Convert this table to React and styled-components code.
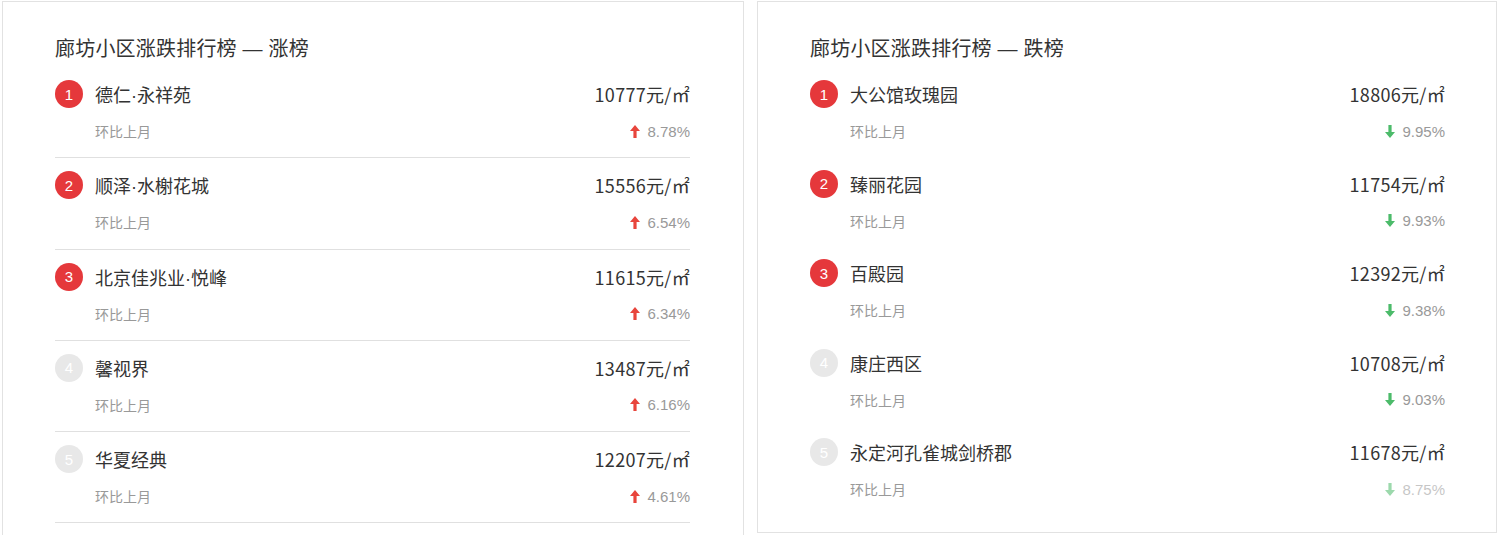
import styled, { createGlobalStyle } from 'styled-components';

const GlobalStyle = createGlobalStyle`
	html, body {
		margin: 0;
		padding: 0;
		background: #fff;
	}
	body {
		font-family: 'Liberation Sans', 'Noto Sans CJK SC', sans-serif;
		color: #333;
	}
`;

const rise = [
	{ name: '德仁·永祥苑', price: 10777, rate: '8.78%' },
	{ name: '顺泽·水榭花城', price: 15556, rate: '6.54%' },
	{ name: '北京佳兆业·悦峰', price: 11615, rate: '6.34%' },
	{ name: '馨视界', price: 13487, rate: '6.16%' },
	{ name: '华夏经典', price: 12207, rate: '4.61%' },
];

const fall = [
	{ name: '大公馆玫瑰园', price: 18806, rate: '9.95%' },
	{ name: '臻丽花园', price: 11754, rate: '9.93%' },
	{ name: '百殿园', price: 12392, rate: '9.38%' },
	{ name: '康庄西区', price: 10708, rate: '9.03%' },
	{ name: '永定河孔雀城剑桥郡', price: 11678, rate: '8.75%', fading: true },
];

// 上涨/下跌箭头
const Arrow = ({ up }) => (
	<svg width='10' height='13' viewBox='0 0 10 13'>
		{up ? (
			<path d='M5 0 L10 6 L6.6 6 L6.6 13 L3.4 13 L3.4 6 L0 6 Z' fill='#e8453c' />
		) : (
			<path d='M5 13 L10 7 L6.6 7 L6.6 0 L3.4 0 L3.4 7 L0 7 Z' fill='#4cbb6a' />
		)}
	</svg>
);

const RankPanel = ({ title, list, up, divided }) => (
	<Panel $divided={divided}>
		<Title>{title}</Title>
		<List>
			{list.map((item, i) => (
				<Row key={item.name} $divided={divided}>
					<MainLine>
						<Badge $top={i < 3}>{i + 1}</Badge>
						<Name>{item.name}</Name>
						<Price>{item.price}元/㎡</Price>
					</MainLine>
					<SubLine $fading={item.fading}>
						<SubLabel>环比上月</SubLabel>
						<Rate>
							<Arrow up={up} />
							{item.rate}
						</Rate>
					</SubLine>
				</Row>
			))}
		</List>
	</Panel>
);

const App = () => (
	<>
		<GlobalStyle />
		<Page>
			<RankPanel title='廊坊小区涨跌排行榜 — 涨榜' list={rise} up divided />
			<RankPanel title='廊坊小区涨跌排行榜 — 跌榜' list={fall} />
		</Page>
	</>
);

export default App;

const Page = styled.div`
	display: grid;
	grid-template-columns: 742px 740px;
	column-gap: 13px;
	align-items: start;
	padding: 1px 0 0 2px;
`;

const Panel = styled.section`
	box-sizing: border-box;
	border: 1px solid #e2e2e2;
	background: #fff;
	padding: 33px ${(p) => (p.$divided ? '53px 14px' : '51px 17px')} 52px;
`;

const Title = styled.h2`
	margin: 0 0 4px;
	height: 28px;
	line-height: 28px;
	font-size: 20px;
	font-weight: normal;
	color: #333;
	white-space: nowrap;
	letter-spacing: 0.2px;
`;

const List = styled.ul`
	margin: 0;
	padding: 0;
	list-style: none;
`;

const Row = styled.li`
	padding: 11px 0 ${(p) => (p.$divided ? '13.3px' : '12.5px')};
	border-bottom: ${(p) => (p.$divided ? '1px solid #e0e0e0' : 'none')};
`;

const MainLine = styled.div`
	display: flex;
	align-items: center;
	height: 32px;
`;

const Badge = styled.span`
	flex: none;
	display: flex;
	align-items: center;
	justify-content: center;
	width: 28px;
	height: 28px;
	border-radius: 50%;
	margin-right: 12px;
	background: ${(p) => (p.$top ? '#e5383b' : '#e8e8e8')};
	color: #fff;
	font-size: 15px;
`;

const Name = styled.span`
	flex: 1;
	font-size: 18px;
	color: #333;
`;

const Price = styled.span`
	font-size: 18px;
	color: #333;
	font-family: 'Noto Sans CJK SC', sans-serif;
	letter-spacing: 0.3px;
`;

const SubLine = styled.div`
	display: flex;
	align-items: center;
	justify-content: space-between;
	height: 26px;
	margin-top: 8px;
	padding-left: 40px;
	font-size: 14px;
	color: #999;

	& > span:last-child {
		opacity: ${(p) => (p.$fading ? 0.55 : 1)};
	}
`;

const SubLabel = styled.span`
	color: #999;
	font-family: 'Noto Sans CJK SC', sans-serif;
`;

const Rate = styled.span`
	display: flex;
	align-items: center;
	gap: 7px;
	color: #999;
	font-size: 15px;
`;
